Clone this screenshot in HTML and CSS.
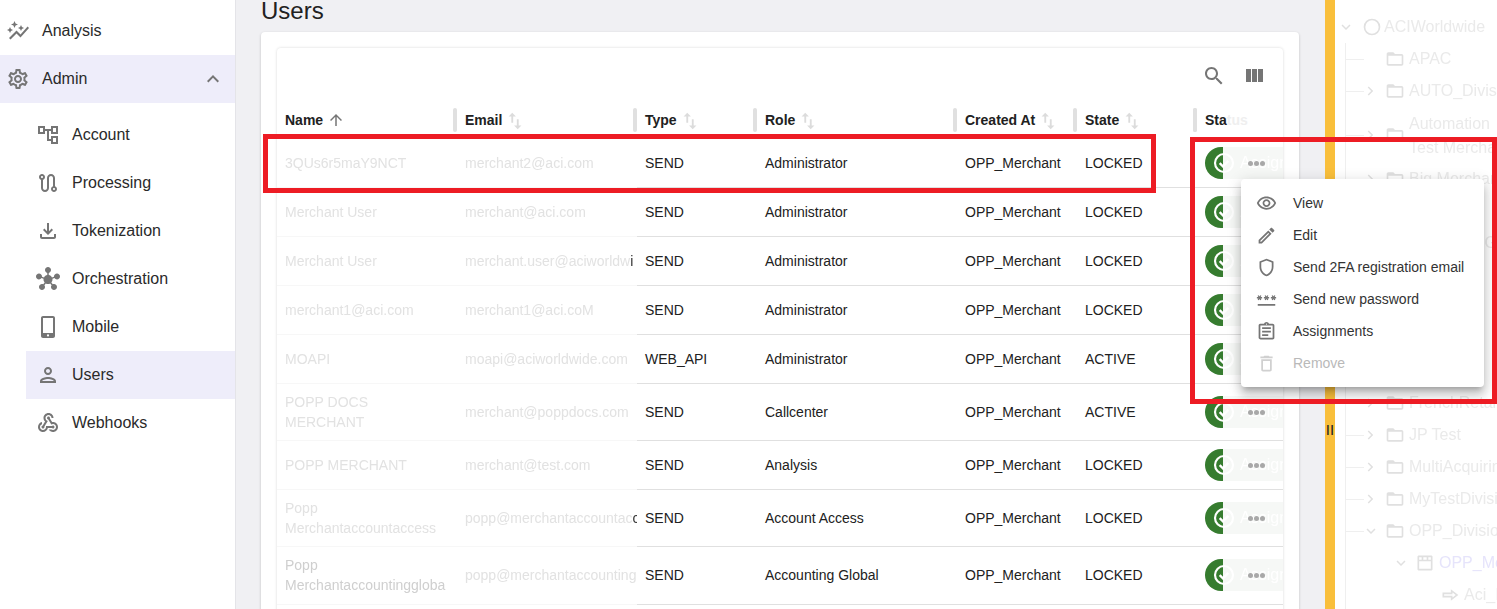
FILE: index.html
```html
<!DOCTYPE html>
<html lang="en">
<head>
<meta charset="utf-8">
<title>Users</title>
<link rel="stylesheet" href="styles.css">
</head>
<body>
<svg class="defs" aria-hidden="true">
  <symbol id="i-graph" viewBox="0 0 24 24"><path d="M14.06 9.94 12 9l2.06-.94L15 6l.94 2.06L18 9l-2.06.94L15 12l-.94-2.06zM4 14l.94-2.06L7 11l-2.06-.94L4 8l-.94 2.06L1 11l2.06.94L4 14zm4.5-5 1.09-2.41L12 5.5 9.59 4.41 8.5 2 7.41 4.41 5 5.5l2.41 1.09L8.5 9zm-4 11.5 6-6.01 4 4L23 8.93l-1.41-1.41-7.09 7.97-4-4L3 19l1.5 1.5z"/></symbol>
  <symbol id="i-gear" viewBox="0 0 24 24"><path d="M19.43 12.98c.04-.32.07-.64.07-.98 0-.34-.03-.66-.07-.98l2.11-1.65c.19-.15.24-.42.12-.64l-2-3.46c-.09-.16-.26-.25-.44-.25-.06 0-.12.01-.17.03l-2.49 1c-.52-.4-1.08-.73-1.69-.98l-.38-2.65C14.46 2.18 14.25 2 14 2h-4c-.25 0-.46.18-.49.42l-.38 2.65c-.61.25-1.17.59-1.69.98l-2.49-1c-.06-.02-.12-.03-.18-.03-.17 0-.34.09-.43.25l-2 3.46c-.13.22-.07.49.12.64l2.11 1.65c-.04.32-.07.65-.07.98 0 .33.03.66.07.98l-2.11 1.65c-.19.15-.24.42-.12.64l2 3.46c.09.16.26.25.44.25.06 0 .12-.01.17-.03l2.49-1c.52.4 1.08.73 1.69.98l.38 2.65c.03.24.24.42.49.42h4c.25 0 .46-.18.49-.42l.38-2.65c.61-.25 1.17-.59 1.69-.98l2.49 1c.06.02.12.03.18.03.17 0 .34-.09.43-.25l2-3.46c.12-.22.07-.49-.12-.64l-2.11-1.65zm-1.98-1.71c.04.31.05.52.05.73 0 .21-.02.43-.05.73l-.14 1.13.89.7 1.08.84-.7 1.21-1.27-.51-1.04-.42-.9.68c-.43.32-.84.56-1.25.73l-1.06.43-.16 1.13-.2 1.35h-1.4l-.19-1.35-.16-1.13-1.06-.43c-.43-.18-.83-.41-1.23-.71l-.91-.7-1.06.43-1.27.51-.7-1.21 1.08-.84.89-.7-.14-1.13c-.03-.31-.05-.54-.05-.74s.02-.43.05-.73l.14-1.13-.89-.7-1.08-.84.7-1.21 1.27.51 1.04.42.9-.68c.43-.32.84-.56 1.25-.73l1.06-.43.16-1.13.2-1.35h1.39l.19 1.35.16 1.13 1.06.43c.43.18.83.41 1.23.71l.91.7 1.06-.43 1.27-.51.7 1.21-1.07.85-.89.7.14 1.13zM12 8c-2.21 0-4 1.79-4 4s1.79 4 4 4 4-1.79 4-4-1.79-4-4-4zm0 6c-1.1 0-2-.9-2-2s.9-2 2-2 2 .9 2 2-.9 2-2 2z"/></symbol>
  <symbol id="i-less" viewBox="0 0 24 24"><path d="M12 8l-6 6 1.41 1.41L12 10.83l4.59 4.58L18 14z"/></symbol>
  <symbol id="i-tree" viewBox="0 0 24 24"><path d="M22 11V3h-7v3H9V3H2v8h7V8h2v10h4v3h7v-8h-7v3h-2V8h2v3h7zM7 9H4V5h3v4zm10 6h3v4h-3v-4zm0-10h3v4h-3V5z"/></symbol>
  <symbol id="i-route" viewBox="0 0 24 24"><path d="M19 15.18V7c0-2.21-1.79-4-4-4s-4 1.79-4 4v10c0 1.1-.9 2-2 2s-2-.9-2-2V8.82C8.16 8.4 9 7.3 9 6c0-1.66-1.34-3-3-3S3 4.34 3 6c0 1.3.84 2.4 2 2.82V17c0 2.21 1.79 4 4 4s4-1.79 4-4V7c0-1.1.9-2 2-2s2 .9 2 2v8.18c-1.16.41-2 1.51-2 2.82 0 1.66 1.34 3 3 3s3-1.34 3-3c0-1.3-.84-2.4-2-2.82zM6 7c-.55 0-1-.45-1-1s.45-1 1-1 1 .45 1 1-.45 1-1 1zm12 12c-.55 0-1-.45-1-1s.45-1 1-1 1 .45 1 1-.45 1-1 1z"/></symbol>
  <symbol id="i-down" viewBox="0 0 24 24"><path d="M18 15v3H6v-3H4v3c0 1.1.9 2 2 2h12c1.1 0 2-.9 2-2v-3h-2zm-1-4-1.41-1.41L13 12.17V4h-2v8.17L8.41 9.59 7 11l5 5 5-5z"/></symbol>
  <symbol id="i-hub" viewBox="0 0 24 24"><path d="M8.4 18.2c.38.5.6 1.12.6 1.8 0 1.66-1.34 3-3 3s-3-1.34-3-3 1.34-3 3-3c.44 0 .85.09 1.23.26l1.41-1.77c-.92-1.03-1.29-2.39-1.09-3.69l-2.03-.68c-.54.83-1.46 1.38-2.52 1.38-1.66 0-3-1.34-3-3s1.34-3 3-3 3 1.34 3 3c0 .07 0 .14-.01.21l2.03.68c.64-1.21 1.82-2.09 3.22-2.32V5.91C9.96 5.57 9 4.4 9 3c0-1.66 1.34-3 3-3s3 1.34 3 3c0 1.4-.96 2.57-2.25 2.91v2.16c1.4.23 2.58 1.11 3.22 2.32l2.03-.68C18 9.64 18 9.57 18 9.5c0-1.66 1.34-3 3-3s3 1.34 3 3-1.34 3-3 3c-1.06 0-1.98-.55-2.52-1.38l-2.03.68c.2 1.29-.16 2.65-1.09 3.69l1.41 1.77C17.15 17.09 17.56 17 18 17c1.66 0 3 1.34 3 3s-1.34 3-3 3-3-1.34-3-3c0-.68.22-1.3.6-1.8l-1.41-1.77c-1.35.75-3.01.76-4.38 0L8.4 18.2z"/></symbol>
  <symbol id="i-phone" viewBox="0 0 24 24"><path fill-rule="evenodd" d="M17 1H7C5.9 1 5 1.9 5 3v18c0 1.1.9 2 2 2h10c1.1 0 2-.9 2-2V3c0-1.1-.9-2-2-2zM7 3h10v15H7V3z"/><circle cx="12" cy="20.4" r="1.1" fill="#fff"/></symbol>
  <symbol id="i-person" viewBox="0 0 24 24"><path d="M12 6c1.1 0 2 .9 2 2s-.9 2-2 2-2-.9-2-2 .9-2 2-2m0 10c2.7 0 5.8 1.29 6 2H6c.23-.72 3.31-2 6-2m0-12C9.79 4 8 5.79 8 8s1.79 4 4 4 4-1.79 4-4-1.79-4-4-4zm0 10c-2.67 0-8 1.34-8 4v2h16v-2c0-2.66-5.33-4-8-4z"/></symbol>
  <symbol id="i-hook" viewBox="0 0 24 24"><path d="M10 15h5.88c.27-.31.67-.5 1.12-.5.83 0 1.5.67 1.5 1.5s-.67 1.5-1.5 1.5c-.44 0-.84-.19-1.12-.5H11.9c-.46 2.28-2.48 4-4.9 4-2.76 0-5-2.24-5-5 0-2.42 1.72-4.44 4-4.9v2.07c-1.16.41-2 1.53-2 2.83 0 1.65 1.35 3 3 3s3-1.35 3-3v-1zm2.5-11c1.65 0 3 1.35 3 3h2c0-2.76-2.24-5-5-5s-5 2.24-5 5c0 1.43.6 2.71 1.55 3.62l-2.35 3.9c-.68.14-1.2.75-1.2 1.48 0 .83.67 1.5 1.5 1.5s1.5-.67 1.5-1.5c0-.16-.02-.31-.07-.45l3.38-5.63C10.49 9.61 9.5 8.42 9.5 7c0-1.65 1.35-3 3-3zm4.5 9c-.64 0-1.23.2-1.72.54l-3.05-5.07C11.53 8.35 11 7.74 11 7c0-.83.67-1.5 1.5-1.5S14 6.17 14 7c0 .15-.02.29-.06.43l2.19 3.65c.28-.05.57-.08.87-.08 2.76 0 5 2.24 5 5s-2.24 5-5 5c-1.85 0-3.47-1.01-4.33-2.5h2.67c.48.32 1.05.5 1.66.5 1.65 0 3-1.35 3-3s-1.35-3-3-3z"/></symbol>
  <symbol id="i-search" viewBox="0 0 24 24"><path d="M15.5 14h-.79l-.28-.27C15.41 12.59 16 11.11 16 9.5 16 5.91 13.09 3 9.5 3S3 5.91 3 9.5 5.91 16 9.5 16c1.61 0 3.09-.59 4.23-1.57l.27.28v.79l5 4.99L20.49 19l-4.99-5zm-6 0C7.01 14 5 11.99 5 9.5S7.01 5 9.5 5 14 7.01 14 9.5 11.99 14 9.5 14z"/></symbol>
  <symbol id="i-cols" viewBox="0 0 24 24"><path d="M10 18h5V5h-5v13zm-6 0h5V5H4v13zM16 5v13h5V5h-5z"/></symbol>
  <symbol id="i-up" viewBox="0 0 24 24"><path d="M4 12l1.41 1.41L11 7.83V20h2V7.83l5.58 5.59L20 12l-8-8-8 8z"/></symbol>
  <symbol id="i-sort" viewBox="0 0 24 24"><path d="M16 17.01V10h-2v7.01h-3L15 21l4-3.99h-3zM9 3 5 6.99h3V14h2V6.99h3L9 3z"/></symbol>
  <symbol id="i-eye" viewBox="0 0 24 24"><path d="M12 6c3.79 0 7.17 2.13 8.82 5.5C19.17 14.87 15.79 17 12 17s-7.17-2.13-8.82-5.5C4.83 8.13 8.21 6 12 6m0-2C7 4 2.73 7.11 1 11.5 2.73 15.89 7 19 12 19s9.27-3.11 11-7.5C21.27 7.11 17 4 12 4zm0 5c1.38 0 2.5 1.12 2.5 2.5S13.38 14 12 14s-2.5-1.12-2.5-2.5S10.62 9 12 9m0-2c-2.48 0-4.5 2.02-4.5 4.5S9.52 16 12 16s4.5-2.02 4.5-4.5S14.48 7 12 7z"/></symbol>
  <symbol id="i-edit" viewBox="0 0 24 24"><path d="M14.06 9.02l.92.92L5.92 19H5v-.92l9.06-9.06M17.66 3c-.25 0-.51.1-.7.29l-1.83 1.83 3.75 3.75 1.83-1.83c.39-.39.39-1.02 0-1.41l-2.34-2.34c-.2-.2-.45-.29-.71-.29zm-3.6 3.19L3 17.25V21h3.75L17.81 9.94l-3.75-3.75z"/></symbol>
  <symbol id="i-shield" viewBox="0 0 24 24"><path d="M12 2 4 5v6.09c0 5.05 3.41 9.76 8 10.91 4.59-1.15 8-5.86 8-10.91V5l-8-3zm6 9.09c0 4-2.55 7.7-6 8.83-3.45-1.13-6-4.82-6-8.83v-4.7l6-2.25 6 2.25v4.7z"/></symbol>
  <symbol id="i-pass" viewBox="0 0 24 24"><path d="M2 17h20v2H2v-2zm1.15-4.05L4 11.47l.85 1.48 1.3-.75-.85-1.48H7v-1.5H5.3l.85-1.47L4.85 7 4 8.47 3.15 7l-1.3.75.85 1.47H1v1.5h1.7l-.85 1.48 1.3.75zm6.7-.75 1.3.75.85-1.48.85 1.48 1.3-.75-.85-1.48H15v-1.5h-1.7l.85-1.47-1.3-.75L12 8.47 11.15 7l-1.3.75.85 1.47H9v1.5h1.7l-.85 1.48zM23 9.22h-1.7l.85-1.47-1.3-.75L20 8.47 19.15 7l-1.3.75.85 1.47H17v1.5h1.7l-.85 1.48 1.3.75.85-1.48.85 1.48 1.3-.75-.85-1.48H23v-1.5z"/></symbol>
  <symbol id="i-clip" viewBox="0 0 24 24"><path d="M19 3h-4.18C14.4 1.84 13.3 1 12 1c-1.3 0-2.4.84-2.82 2H5c-.14 0-.27.01-.4.04-.39.08-.74.28-1.01.55-.18.18-.33.4-.43.64-.1.23-.16.49-.16.77v14c0 .27.06.54.16.78s.25.45.43.64c.27.27.62.47 1.01.55.13.02.26.03.4.03h14c1.1 0 2-.9 2-2V5c0-1.1-.9-2-2-2zm-7-.25c.41 0 .75.34.75.75s-.34.75-.75.75-.75-.34-.75-.75.34-.75.75-.75zM19 19H5V5h14v14zM7 15h7v2H7zm0-4h10v2H7zm0-4h10v2H7z"/></symbol>
  <symbol id="i-trash" viewBox="0 0 24 24"><path d="M16 9v10H8V9h8m-1.5-6h-5l-1 1H5v2h14V4h-3.5l-1-1zM18 7H6v12c0 1.1.9 2 2 2h8c1.1 0 2-.9 2-2V7z"/></symbol>
  <symbol id="i-folder" viewBox="0 0 24 24"><path d="M20 6h-8l-2-2H4c-1.1 0-2 .9-2 2v12c0 1.1.9 2 2 2h16c1.1 0 2-.9 2-2V8c0-1.1-.9-2-2-2zm0 12H4V8h16v10z"/></symbol>
  <symbol id="i-right" viewBox="0 0 24 24"><path d="M9 6 7.6 7.4 12.2 12l-4.6 4.6L9 18l6-6z"/></symbol>
  <symbol id="i-more" viewBox="0 0 24 24"><path d="M7.4 8.6 6 10l6 6 6-6-1.4-1.4-4.6 4.6z"/></symbol>
  <symbol id="i-store" viewBox="0 0 24 24"><path d="M4 3h16l1 1v16l-1 1H4l-1-1V4l1-1zm1 2v3h3V5H5zm5 0v3h4V5h-4zm6 0v3h3V5h-3zM5 10v9h14v-9H5z" fill-rule="evenodd"/></symbol>
  <symbol id="i-arrow" viewBox="0 0 24 24"><path fill-rule="evenodd" d="M13 5v4H3v6h10v4l9-7-9-7zm2 4.100L18.800 12 15 14.900V13H5v-2h10V9.100z"/></symbol>
  <symbol id="i-ring" viewBox="0 0 24 24"><path d="M12 2a10 10 0 1 0 0 20 10 10 0 0 0 0-20zm0 2a8 8 0 1 1 0 16 8 8 0 0 1 0-16z"/></symbol>
</svg>

<div class="app">
  <aside class="sidebar">
    <a class="nav"><svg class="ico"><use href="#i-graph"/></svg><span>Analysis</span></a>
    <a class="nav open"><svg class="ico"><use href="#i-gear"/></svg><span class="grow">Admin</span><svg class="ico chev"><use href="#i-less"/></svg></a>
    <nav class="subnav">
      <a class="sub"><svg class="ico"><use href="#i-tree"/></svg><span>Account</span></a>
      <a class="sub"><svg class="ico"><use href="#i-route"/></svg><span>Processing</span></a>
      <a class="sub"><svg class="ico"><use href="#i-down"/></svg><span>Tokenization</span></a>
      <a class="sub"><svg class="ico"><use href="#i-hub"/></svg><span>Orchestration</span></a>
      <a class="sub"><svg class="ico"><use href="#i-phone"/></svg><span>Mobile</span></a>
      <a class="sub active"><svg class="ico"><use href="#i-person"/></svg><span>Users</span></a>
      <a class="sub"><svg class="ico"><use href="#i-hook"/></svg><span>Webhooks</span></a>
    </nav>
  </aside>

  <main class="content">
    <h1 class="title">Users</h1>
    <section class="outer-card">
      <div class="inner-card">
        <div class="toolbar">
          <svg class="tool"><use href="#i-search"/></svg>
          <svg class="tool"><use href="#i-cols"/></svg>
        </div>
        <div class="table">
          <div class="row head">
            <div class="th">Name<svg class="up"><use href="#i-up"/></svg></div>
            <div class="th">Email<svg class="sort"><use href="#i-sort"/></svg></div>
            <div class="th">Type<svg class="sort"><use href="#i-sort"/></svg></div>
            <div class="th">Role<svg class="sort"><use href="#i-sort"/></svg></div>
            <div class="th">Created At<svg class="sort"><use href="#i-sort"/></svg></div>
            <div class="th">State<svg class="sort"><use href="#i-sort"/></svg></div>
            <div class="th last">Sta<span class="fade">tus</span></div>
          </div>

          <div class="row h48">
            <div class="td ghost">3QUs6r5maY9NCT</div><div class="td ghost">merchant2@aci.com</div>
            <div class="td">SEND</div><div class="td">Administrator</div><div class="td">OPP_Merchant</div><div class="td">LOCKED</div>
            <div class="td status"><div class="pill"></div><div class="acts"><svg class="ok" viewBox="0 0 24 24"><circle cx="12" cy="12" r="8.300"/><path d="M8 12.200l3 2.800 5-5"/></svg><span class="assign">Assign</span><i></i><i></i><i></i></div></div>
          </div>
          <div class="row h48">
            <div class="td ghost">Merchant User</div><div class="td ghost">merchant@aci.com</div>
            <div class="td">SEND</div><div class="td">Administrator</div><div class="td">OPP_Merchant</div><div class="td">LOCKED</div>
            <div class="td status"><div class="pill"></div><div class="acts"><svg class="ok" viewBox="0 0 24 24"><circle cx="12" cy="12" r="8.300"/><path d="M8 12.200l3 2.800 5-5"/></svg><span class="assign">Assign</span><i></i><i></i><i></i></div></div>
          </div>
          <div class="row h48">
            <div class="td ghost">Merchant User</div><div class="td ghost clip">merchant.user@aciworldw<b>i</b></div>
            <div class="td">SEND</div><div class="td">Administrator</div><div class="td">OPP_Merchant</div><div class="td">LOCKED</div>
            <div class="td status"><div class="pill"></div><div class="acts"><svg class="ok" viewBox="0 0 24 24"><circle cx="12" cy="12" r="8.300"/><path d="M8 12.200l3 2.800 5-5"/></svg><span class="assign">Assign</span><i></i><i></i><i></i></div></div>
          </div>
          <div class="row h48">
            <div class="td ghost">merchant1@aci.com</div><div class="td ghost">merchant1@aci.coM</div>
            <div class="td">SEND</div><div class="td">Administrator</div><div class="td">OPP_Merchant</div><div class="td">LOCKED</div>
            <div class="td status"><div class="pill"></div><div class="acts"><svg class="ok" viewBox="0 0 24 24"><circle cx="12" cy="12" r="8.300"/><path d="M8 12.200l3 2.800 5-5"/></svg><span class="assign">Assign</span><i></i><i></i><i></i></div></div>
          </div>
          <div class="row h48">
            <div class="td ghost">MOAPI</div><div class="td ghost">moapi@aciworldwide.com</div>
            <div class="td">WEB_API</div><div class="td">Administrator</div><div class="td">OPP_Merchant</div><div class="td">ACTIVE</div>
            <div class="td status"><div class="pill"></div><div class="acts"><svg class="ok" viewBox="0 0 24 24"><circle cx="12" cy="12" r="8.300"/><path d="M8 12.200l3 2.800 5-5"/></svg><span class="assign">Assign</span><i></i><i></i><i></i></div></div>
          </div>
          <div class="row h57">
            <div class="td ghost two">POPP DOCS MERCHANT</div><div class="td ghost">merchant@poppdocs.com</div>
            <div class="td">SEND</div><div class="td">Callcenter</div><div class="td">OPP_Merchant</div><div class="td">ACTIVE</div>
            <div class="td status"><div class="pill"></div><div class="acts"><svg class="ok" viewBox="0 0 24 24"><circle cx="12" cy="12" r="8.300"/><path d="M8 12.200l3 2.800 5-5"/></svg><span class="assign">Assign</span><i></i><i></i><i></i></div></div>
          </div>
          <div class="row h48">
            <div class="td ghost">POPP MERCHANT</div><div class="td ghost">merchant@test.com</div>
            <div class="td">SEND</div><div class="td">Analysis</div><div class="td">OPP_Merchant</div><div class="td">LOCKED</div>
            <div class="td status"><div class="pill"></div><div class="acts"><svg class="ok" viewBox="0 0 24 24"><circle cx="12" cy="12" r="8.300"/><path d="M8 12.200l3 2.800 5-5"/></svg><span class="assign">Assign</span><i></i><i></i><i></i></div></div>
          </div>
          <div class="row h57">
            <div class="td ghost two">Popp Merchantaccountaccess</div><div class="td ghost clip">popp@merchantaccountac<b>c</b></div>
            <div class="td">SEND</div><div class="td">Account Access</div><div class="td">OPP_Merchant</div><div class="td">LOCKED</div>
            <div class="td status"><div class="pill"></div><div class="acts"><svg class="ok" viewBox="0 0 24 24"><circle cx="12" cy="12" r="8.300"/><path d="M8 12.200l3 2.800 5-5"/></svg><span class="assign">Assign</span><i></i><i></i><i></i></div></div>
          </div>
          <div class="row h58">
            <div class="td ghost two dim">Popp Merchantaccountinggloba</div><div class="td ghost clip">popp@merchantaccounting</div>
            <div class="td">SEND</div><div class="td">Accounting Global</div><div class="td">OPP_Merchant</div><div class="td">LOCKED</div>
            <div class="td status"><div class="pill"></div><div class="acts"><svg class="ok" viewBox="0 0 24 24"><circle cx="12" cy="12" r="8.300"/><path d="M8 12.200l3 2.800 5-5"/></svg><span class="assign">Assign</span><i></i><i></i><i></i></div></div>
          </div>
        </div>
      </div>
    </section>
  </main>

  <div class="splitter"><span class="grip">II</span></div>

  <aside class="tree">
    <div class="tn root"><svg class="tc"><use href="#i-more"/></svg><svg class="tf"><use href="#i-ring"/></svg><span>ACIWorldwide</span></div>
    <div class="kids">
      <div class="tn l1"><span class="tc"></span><svg class="tf"><use href="#i-folder"/></svg><span>APAC</span></div>
      <div class="tn l1"><svg class="tc"><use href="#i-right"/></svg><svg class="tf"><use href="#i-folder"/></svg><span>AUTO_Division</span></div>
      <div class="tn l1 tall"><svg class="tc"><use href="#i-right"/></svg><svg class="tf"><use href="#i-folder"/></svg><span>Automation<br>Test Merchant</span></div>
      <div class="tn l1"><svg class="tc"><use href="#i-right"/></svg><svg class="tf"><use href="#i-folder"/></svg><span>Big Merchant</span></div>
      <div class="tn l1"><svg class="tc"><use href="#i-right"/></svg><svg class="tf"><use href="#i-folder"/></svg><span>Channels</span></div>
      <div class="tn l1"><svg class="tc"><use href="#i-right"/></svg><svg class="tf"><use href="#i-folder"/></svg><span>Demo Set G</span></div>
      <div class="tn l1"><svg class="tc"><use href="#i-right"/></svg><svg class="tf"><use href="#i-folder"/></svg><span>Digital</span></div>
      <div class="tn l1"><svg class="tc"><use href="#i-right"/></svg><svg class="tf"><use href="#i-folder"/></svg><span>Divisions</span></div>
      <div class="tn l1"><svg class="tc"><use href="#i-right"/></svg><svg class="tf"><use href="#i-folder"/></svg><span>EMEA</span></div>
      <div class="tn l1"><svg class="tc"><use href="#i-right"/></svg><svg class="tf"><use href="#i-folder"/></svg><span>Europe</span></div>
      <div class="tn l1"><svg class="tc"><use href="#i-right"/></svg><svg class="tf"><use href="#i-folder"/></svg><span>FrenchRetail</span></div>
      <div class="tn l1"><svg class="tc"><use href="#i-right"/></svg><svg class="tf"><use href="#i-folder"/></svg><span>JP Test</span></div>
      <div class="tn l1"><svg class="tc"><use href="#i-right"/></svg><svg class="tf"><use href="#i-folder"/></svg><span>MultiAcquiring</span></div>
      <div class="tn l1"><svg class="tc"><use href="#i-right"/></svg><svg class="tf"><use href="#i-folder"/></svg><span>MyTestDivision</span></div>
      <div class="tn l1"><svg class="tc"><use href="#i-more"/></svg><svg class="tf"><use href="#i-folder"/></svg><span>OPP_Division</span></div>
      <div class="tn l2"><svg class="tc"><use href="#i-more"/></svg><svg class="tf"><use href="#i-store"/></svg><span class="violet">OPP_Merchant</span></div>
      <div class="tn l3"><svg class="tf"><use href="#i-arrow"/></svg><span>Aci_Innovation</span></div>
    </div>
  </aside>
</div>

<div class="menu" role="menu">
  <div class="mi"><svg class="mic"><use href="#i-eye"/></svg><span>View</span></div>
  <div class="mi"><svg class="mic"><use href="#i-edit"/></svg><span>Edit</span></div>
  <div class="mi"><svg class="mic"><use href="#i-shield"/></svg><span>Send 2FA registration email</span></div>
  <div class="mi"><svg class="mic"><use href="#i-pass"/></svg><span>Send new password</span></div>
  <div class="mi"><svg class="mic"><use href="#i-clip"/></svg><span>Assignments</span></div>
  <div class="mi off"><svg class="mic"><use href="#i-trash"/></svg><span>Remove</span></div>
</div>
<div class="mark mark-row"></div>
<div class="mark mark-menu"></div>
</body>
</html>
```

FILE: styles.css
```css
* { box-sizing: border-box; }
html, body { margin: 0; height: 100%; overflow: hidden; }
body { font-family: "Liberation Sans", Arial, sans-serif; font-size: 14px; color: #212121; background: #fff; }
.defs { display: none; }
.app { display: flex; height: 609px; width: 1497px; overflow: hidden; }
svg { fill: currentColor; flex: none; }

/* sidebar */
.sidebar { width: 236px; flex: none; padding-top: 7px; background: #fff; border-right: 1px solid #e4e4e8; }
.nav { display: flex; align-items: center; height: 48px; font-size: 16px; color: #2a2a2a; padding-left: 6px; }
.nav .ico { margin-right: 12px; }
.nav.open { background: #eeedfa; }
.ico { width: 24px; height: 24px; color: #757575; }
.grow { flex: 1; }
.nav .chev { margin-right: 10px; }
.subnav { padding-top: 8px; }
.sub { display: flex; align-items: center; height: 48px; margin-left: 26px; padding-left: 10px; font-size: 16px; color: #2a2a2a; }
.sub .ico { margin-right: 12px; }
.sub.active { background: #eeedfa; }

/* main */
.content { width: 1089px; flex: none; background: #f0f0f3; padding-left: 25px; }
.title { margin: 0; height: 32px; font-size: 24px; font-weight: 400; line-height: 21px; color: #212121; }
.outer-card { width: 1038px; height: 620px; background: #fff; border-radius: 4px; padding: 16px 16px 0; box-shadow: 0 1px 3px rgba(0,0,0,.2); }
.inner-card { height: 100%; background: #fff; border-radius: 4px; box-shadow: 0 0 3px rgba(0,0,0,.16); }
.toolbar { height: 50px; display: flex; justify-content: flex-end; align-items: flex-start; gap: 16px; padding: 16px 17px 0 0; }
.tool { width: 24px; height: 24px; color: #757575; }
.table { display: flex; flex-direction: column; }
.row { display: grid; grid-template-columns: 180px 180px 120px 200px 120px 120px 86px; }
.head { height: 41px; padding-top: 10px; }
.h48 { height: 49px; }
.h57 { height: 57px; }
.h58 { height: 58px; }
.h58 .td { padding-bottom: 1px; }
.th { position: relative; height: 24px; display: flex; align-items: center; padding-left: 8px; font-weight: 700; color: #212121; white-space: nowrap; }
.th::after { content: ""; position: absolute; right: 0; top: 0; width: 4px; height: 24px; border-radius: 2px; background: #e0e0e0; }
.th.last::after { display: none; }
.th.last::before { content: ""; position: absolute; left: -4px; top: 0; width: 4px; height: 24px; border-radius: 2px; background: #e0e0e0; }
.fade { color: #efefef; }
.up { width: 18px; height: 18px; color: #757575; margin-left: 4px; }
.sort { width: 22px; height: 22px; color: #dcdcdc; margin: 2px 0 0 2px; }
.td { display: flex; align-items: center; padding: 0 8px; border-bottom: 1px solid #e0e0e0; color: #212121; white-space: nowrap; overflow: hidden; min-width: 0; }
.row .ghost { color: #e2e2e2; border-bottom-color: #f7f7f7; filter: blur(.55px); }
.ghost b { font-weight: 400; color: #333; }
.clip { padding-right: 0; }
.two { white-space: normal; line-height: 20px; padding-right: 12px; }
.row .two.dim { color: #cfcfcf; padding-right: 0; }
.status { padding: 0 0 0 8px; overflow: visible; }
.pill { width: 18px; height: 32px; background: #367c2f; border-radius: 16px 0 0 16px; flex: none; }
.acts { position: relative; flex: 1; height: 32px; background: #f6f8f6; display: flex; align-items: center; justify-content: flex-end; gap: 1px; padding-right: 18px; }
.acts i { position: relative; width: 5px; height: 5px; border-radius: 50%; background: #a8a8a8; }
.assign { position: absolute; left: 0; top: 5px; font-size: 16px; line-height: 22px; color: #fff; width: 60px; overflow: hidden; padding-left: 17px; filter: blur(.4px); }
.ok { position: absolute; left: -12px; top: 3px; width: 26px; height: 26px; fill: none; stroke: #fff; stroke-width: 2; }
.ok path { stroke-width: 2.200; }

/* splitter */
.splitter { width: 10px; flex: none; background: #f9bf3b; display: flex; align-items: center; justify-content: center; }
.grip { font-size: 15px; color: #222; padding-top: 250px; line-height: 1; }

/* tree */
.tree { flex: 1; min-width: 0; padding-top: 11px; font-size: 16px; color: #eaeaea; overflow: hidden; white-space: nowrap; filter: blur(.6px); }
.tn { display: flex; align-items: center; height: 32px; }
.tn.tall { height: 56px; }
.tn.tall span:last-child { line-height: 24px; margin-top: 2px; }
.tc { width: 18px; height: 18px; margin-right: 5px; display: block; flex: none; color: #e0e0e0; }
.tf { width: 20px; height: 20px; margin-right: 4px; color: #e0e0e0; }
.root { padding-left: 2px; }
.root .tf { margin-left: 2px; margin-right: 2px; }
.kids { margin-left: 10px; border-left: 1px solid #efefef; }
.l1 { padding-left: 16px; background: linear-gradient(#efefef, #efefef) no-repeat 0 50% / 18px 1px; }
.l2 { padding-left: 46px; }
.l3 { padding-left: 94px; }
.violet { color: #e6e4fb; }

/* menu */
.menu { position: absolute; left: 1241px; top: 179px; width: 243px; height: 208px; padding: 8px 0; background: #fff; border-radius: 4px; box-shadow: 0 5px 5px -3px rgba(0,0,0,.2), 0 8px 10px 1px rgba(0,0,0,.14), 0 3px 14px 2px rgba(0,0,0,.12); font-size: 14px; color: #333; }
.mi { display: flex; align-items: center; height: 32px; padding-left: 16px; }
.mic { width: 21px; height: 21px; margin-right: 16px; margin-left: -1px; color: #757575; }
.off { color: #b9b9b9; }
.off .mic { color: #d0d0d0; }

/* annotation rectangles */
.mark { position: absolute; border: 5px solid #ed1c24; pointer-events: none; }
.mark-row { left: 263px; top: 134px; width: 893px; height: 59px; }
.mark-menu { left: 1190px; top: 137px; width: 307px; height: 267px; }
```
